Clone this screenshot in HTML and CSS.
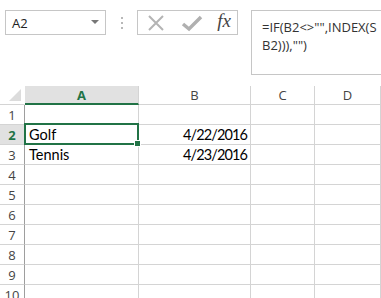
FILE: index.html
```html
<!DOCTYPE html>
<html>
<head>
<meta charset="UTF-8">
<title>Sheet</title>
<link rel="stylesheet" href="styles.css">
</head>
<body>
	<div class="bar">
		<div class="namebox">
			<span>A2</span>
			<svg class="arrow" width="8" height="5" viewBox="0 0 8 5"><path d="M0 0H8L4 4Z" fill="#777"/></svg>
		</div>
		<div class="grip"><i></i><i></i><i></i></div>
		<div class="buttons">
			<svg width="20" height="20" viewBox="0 0 20 20"><path d="M3 3L17 17M17 3L3 17" stroke="#b4b4b4" stroke-width="2"/></svg>
			<svg width="22" height="20" viewBox="0 0 22 20"><path d="M2 11L8 16L20 4" stroke="#b0b0b0" stroke-width="3.5" fill="none"/></svg>
			<span class="fx">fx</span>
		</div>
		<div class="formula">
			<div class="line">=IF(B2&lt;&gt;"",INDEX(S</div>
			<div class="line">B2))),"")</div>
		</div>
	</div>

	<div class="sheet">
		<div class="corner"><span class="tri"></span></div>
		<div class="colhead sel">A</div>
		<div class="colhead">B</div>
		<div class="colhead">C</div>
		<div class="colhead">D</div>

		<div class="rowhead">1</div><div class="cell"></div><div class="cell"></div><div class="cell"></div><div class="cell"></div>
		<div class="rowhead sel">2</div><div class="cell active">Golf</div><div class="cell num">4/22/2016</div><div class="cell"></div><div class="cell"></div>
		<div class="rowhead">3</div><div class="cell">Tennis</div><div class="cell num">4/23/2016</div><div class="cell"></div><div class="cell"></div>
		<div class="rowhead">4</div><div class="cell"></div><div class="cell"></div><div class="cell"></div><div class="cell"></div>
		<div class="rowhead">5</div><div class="cell"></div><div class="cell"></div><div class="cell"></div><div class="cell"></div>
		<div class="rowhead">6</div><div class="cell"></div><div class="cell"></div><div class="cell"></div><div class="cell"></div>
		<div class="rowhead">7</div><div class="cell"></div><div class="cell"></div><div class="cell"></div><div class="cell"></div>
		<div class="rowhead">8</div><div class="cell"></div><div class="cell"></div><div class="cell"></div><div class="cell"></div>
		<div class="rowhead">9</div><div class="cell"></div><div class="cell"></div><div class="cell"></div><div class="cell"></div>
		<div class="rowhead">10</div><div class="cell"></div><div class="cell"></div><div class="cell"></div><div class="cell"></div>
	</div>
</body>
</html>
```

FILE: styles.css
```css
html, body {
	margin: 0;
	padding: 0;
	background: #fff;
	overflow: hidden;
}

body {
	font-family: "Open Sans", "Noto Sans", sans-serif;
	font-size: 12px;
	color: #333;
}

.bar {
	display: flex;
	align-items: flex-start;
	padding: 10px 0 0 5px;
	height: 65px;
}

.namebox {
	box-sizing: border-box;
	width: 101px;
	height: 25px;
	border: 1px solid #c6c6c6;
	display: flex;
	align-items: center;
	justify-content: space-between;
	padding: 0 6px 0 6px;
	font-size: 13px;
	color: #222;
}

.namebox .arrow {
	margin-top: -1px;
}

.grip {
	width: 31px;
	height: 25px;
	display: flex;
	flex-direction: column;
	align-items: center;
	justify-content: center;
	gap: 3px;
}

.grip i {
	display: block;
	width: 2px;
	height: 2px;
	background: #b8b8b8;
}

.buttons {
	box-sizing: border-box;
	width: 101px;
	height: 25px;
	border: 1px solid #c6c6c6;
	display: flex;
	align-items: center;
	justify-content: space-between;
	padding: 0 6px 0 8px;
}

.fx {
	font-family: "Liberation Serif", serif;
	font-style: italic;
	font-size: 19px;
	color: #444;
	margin-top: -3px;
}

.formula {
	box-sizing: border-box;
	margin-left: 13px;
	flex: 1;
	height: 65px;
	border: 1px solid #c6c6c6;
	border-right: none;
	padding: 7px 0 0 10px;
	overflow: hidden;
	font-size: 13px;
	line-height: 18px;
	color: #333;
}

.formula .line {
	white-space: nowrap;
}

.sheet {
	margin-top: 11px;
	display: grid;
	grid-template-columns: 25px 114px 112px 64px 66px;
	grid-template-rows: 19px;
	grid-auto-rows: 20px;
}

.sheet > div {
	box-sizing: border-box;
	border-right: 1px solid #d4d4d4;
	border-bottom: 1px solid #d4d4d4;
}

.corner {
	position: relative;
}

.corner .tri {
	position: absolute;
	right: 3px;
	bottom: 3px;
	width: 0;
	height: 0;
	border-left: 12px solid transparent;
	border-bottom: 12px solid #dcdcdc;
}

.sheet > .corner {
	border-right: 1px solid #fff;
}

.colhead {
	text-align: center;
	font-size: 13px;
	line-height: 18px;
	color: #444;
}

.colhead.sel {
	background: #e1e1e1;
	color: #217346;
	font-weight: bold;
	border-bottom: 2px solid #217346;
}

.sheet > .rowhead {
	text-align: center;
	font-size: 13px;
	line-height: 20px;
	color: #444;
	border-right: 1px solid #9e9e9e;
}

.rowhead.sel {
	background: #e1e1e1;
	color: #217346;
	font-weight: bold;
}

.cell {
	font-family: "Lato", "Liberation Sans", sans-serif;
	font-size: 14.5px;
	line-height: 20px;
	color: #000;
	padding: 0 4px;
	white-space: nowrap;
}

.cell.num {
	text-align: right;
	letter-spacing: -0.9px;
	padding-right: 3px;
}

.cell.active {
	position: relative;
}

.cell.active::before {
	content: "";
	position: absolute;
	left: -1px;
	top: -2px;
	right: -1px;
	bottom: -1px;
	border: 2px solid #217346;
}

.cell.active::after {
	content: "";
	position: absolute;
	right: -3px;
	bottom: -3px;
	width: 5px;
	height: 5px;
	background: #217346;
	border: 1px solid #fff;
}
```
